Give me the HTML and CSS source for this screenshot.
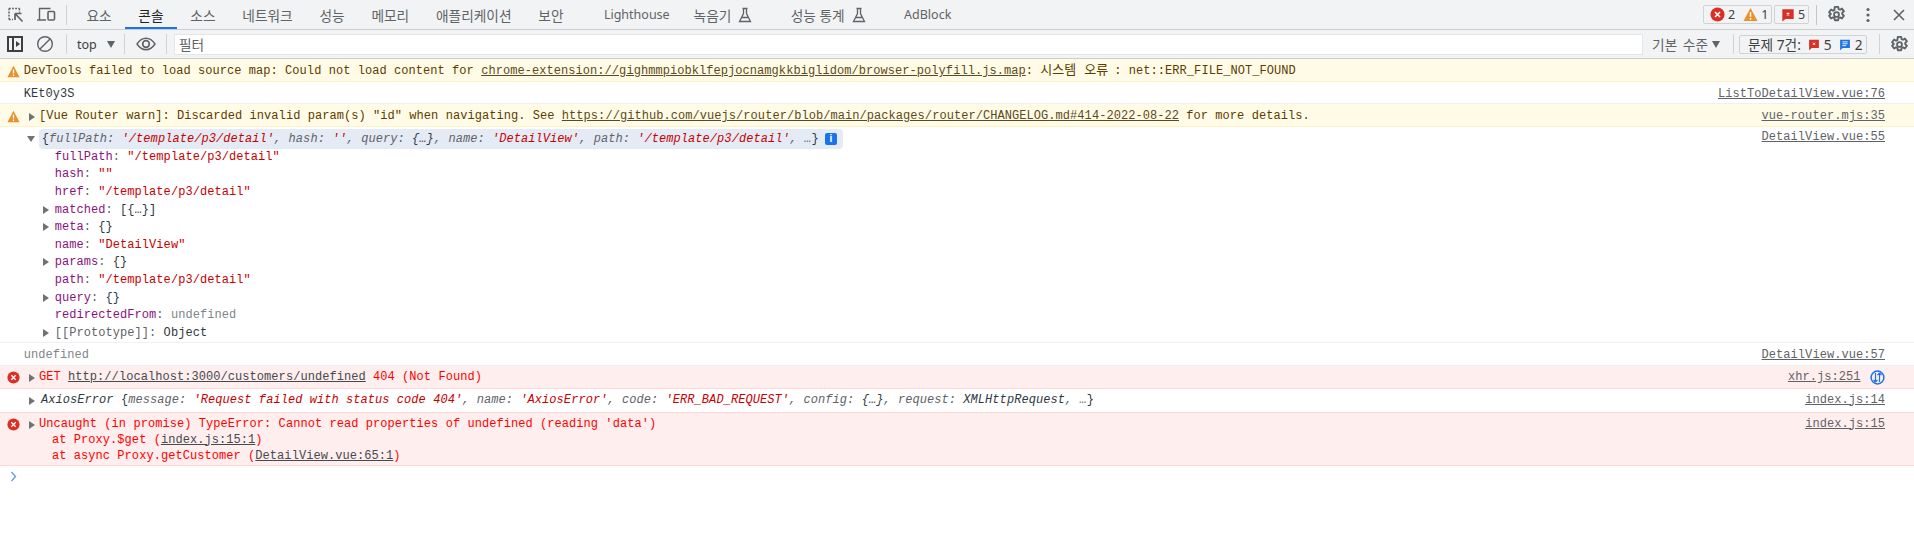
FILE: index.html
```html
<!DOCTYPE html>
<html lang="ko">
<head>
<meta charset="utf-8">
<title>DevTools Console</title>
<link rel="stylesheet" href="styles.css">
</head>
<body>
<svg class="defs" width="0" height="0" aria-hidden="true">
  <defs>
    <symbol id="i-gear" viewBox="0 0 20 20">
      <path d="M8.2 2h3.6l.4 2.3 1.5.7 2-1.2 2.1 2.9-1.7 1.5v1.6l1.7 1.5-2.1 2.9-2-1.2-1.5.7-.4 2.3H8.2l-.4-2.3-1.500-.7-2 1.2-2.100-2.900 1.700-1.500V9.200L2.200 7.700l2.100-2.900 2 1.200 1.500-.7z" fill="none" stroke="#5f6368" stroke-width="2" stroke-linejoin="round"/>
      <circle cx="10" cy="10" r="2.600" fill="none" stroke="#5f6368" stroke-width="1.900"/>
    </symbol>
    <symbol id="i-err" viewBox="0 0 16 16">
      <circle cx="8" cy="8" r="7.500" fill="#d93025"/>
      <path d="M5.300 5.300l5.400 5.400M10.700 5.300l-5.400 5.400" stroke="#fff" stroke-width="1.600"/>
    </symbol>
    <symbol id="i-warn" viewBox="0 0 16 16">
      <path d="M8 1L15.500 15H.5z" fill="#e8912d"/>
      <path d="M8 5.500v5M8 11.700v1.800" stroke="#fff" stroke-width="1.600"/>
    </symbol>
    <symbol id="i-flag" viewBox="0 0 16 16">
      <path d="M1.500 1.500h13v11H5L1.500 15.500z" fill="#d93025"/>
      <path d="M6.500 5.500l3 3M9.500 5.500l-3 3" stroke="#fff" stroke-width="1.300"/>
    </symbol>
    <symbol id="i-info" viewBox="0 0 16 16">
      <path d="M1.500 1.500h13v11H5L1.500 15.500z" fill="#1a73e8"/>
      <path d="M4.500 4.500h7M4.500 7h7M4.500 9.500h5" stroke="#fff" stroke-width="1.200"/>
    </symbol>
    <symbol id="i-flask" viewBox="0 0 14 16">
      <path d="M4.500 1.500h5M5.500 1.500v5L1.500 14.500h11L8.500 6.500v-5M3.800 10.500h6.400" fill="none" stroke="#5f6368" stroke-width="1.300"/>
    </symbol>
  </defs>
</svg>

<header class="tabbar">
  <div class="icon-group">
    <svg class="tool-icon" width="18" height="18" viewBox="0 0 18 18"><path d="M2 2.500h10.500M2 2.500v11M2 13.500h4M12.500 2.500v4" fill="none" stroke="#5f6368" stroke-width="1.500" stroke-dasharray="1.800 1.300"/><path d="M8 7.500h6.500M8 7.500v6.500M8 7.500l7.500 8" fill="none" stroke="#5f6368" stroke-width="1.700"/></svg>
    <svg class="tool-icon device" width="20" height="18" viewBox="0 0 20 18"><path d="M3.500 13.500V2.500h11M1 14h9" fill="none" stroke="#5f6368" stroke-width="1.400"/><rect x="12" y="5.500" width="6.500" height="8.500" rx="1" fill="none" stroke="#5f6368" stroke-width="1.600"/></svg>
    <span class="divider"></span>
  </div>
  <nav class="tabs">
    <span class="tab">요소</span>
    <span class="tab selected">콘솔</span>
    <span class="tab">소스</span>
    <span class="tab">네트워크</span>
    <span class="tab">성능</span>
    <span class="tab">메모리</span>
    <span class="tab">애플리케이션</span>
    <span class="tab">보안</span>
    <span class="tab wide latin lighthouse">Lighthouse</span>
    <span class="tab recorder">녹음기<svg class="flask" width="14" height="16"><use href="#i-flask"/></svg></span>
    <span class="tab wide">성능 통계<svg class="flask" width="14" height="16"><use href="#i-flask"/></svg></span>
    <span class="tab wide latin">AdBlock</span>
  </nav>
  <div class="tabbar-right">
    <span class="badge badge-counts">
      <svg width="15" height="15"><use href="#i-err"/></svg><span>2</span>
      <svg class="gap-icon" width="15" height="15"><use href="#i-warn"/></svg><span>1</span>
    </span>
    <span class="badge badge-issues">
      <svg width="14" height="14"><use href="#i-flag"/></svg><span>5</span>
    </span>
    <span class="divider divider-strong"></span>
    <svg class="gear" width="19" height="19"><use href="#i-gear"/></svg>
    <svg class="dots" width="4" height="16" viewBox="0 0 4 16"><circle cx="2" cy="2.500" r="1.600" fill="#5f6368"/><circle cx="2" cy="8" r="1.600" fill="#5f6368"/><circle cx="2" cy="13.500" r="1.600" fill="#5f6368"/></svg>
    <svg class="close" width="14" height="14" viewBox="0 0 14 14"><path d="M2 2l10 10M12 2L2 12" stroke="#5f6368" stroke-width="1.600"/></svg>
  </div>
</header>

<section class="toolbar">
  <svg class="tb-sidebar" width="16" height="16" viewBox="0 0 16 16"><rect x="1" y="1" width="14" height="14" fill="none" stroke="#3c4043" stroke-width="2"/><path d="M6 1v14" stroke="#3c4043" stroke-width="2"/><path d="M9 5l4 3-4 3z" fill="#3c4043"/></svg>
  <svg class="tb-clear" width="18" height="18" viewBox="0 0 18 18"><circle cx="9" cy="9" r="7.300" fill="none" stroke="#5f6368" stroke-width="1.400"/><path d="M4 14L14 4" stroke="#5f6368" stroke-width="1.400"/></svg>
  <span class="divider"></span>
  <span class="context">top</span>
  <span class="select-arrow"></span>
  <span class="divider"></span>
  <svg class="tb-eye" width="20" height="14" viewBox="0 0 20 14"><path d="M1 7c2.500-3.800 5.500-5.700 9-5.700S16.500 3.200 19 7c-2.500 3.800-5.500 5.700-9 5.700S3.500 10.800 1 7z" fill="none" stroke="#5f6368" stroke-width="1.400"/><circle cx="10" cy="7" r="3.300" fill="none" stroke="#5f6368" stroke-width="1.700"/></svg>
  <span class="divider"></span>
  <div class="filter">필터</div>
  <span class="level">기본 수준</span>
  <span class="select-arrow level-arrow"></span>
  <span class="divider"></span>
  <span class="issues">
    <span>문제 7건:</span>
    <svg class="issue-flag" width="12" height="13"><use href="#i-flag"/></svg><span>5</span>
    <svg class="issue-flag" width="12" height="13"><use href="#i-info"/></svg><span>2</span>
  </span>
  <span class="divider"></span>
  <svg class="gear" width="19" height="19"><use href="#i-gear"/></svg>
</section>

<main class="console">
  <div class="msg warn">
    <svg class="msg-icon" width="13" height="13"><use href="#i-warn"/></svg>
    <div class="msg-body">DevTools failed to load source map: Could not load content for <a class="link warn-link">chrome-extension://gighmmpiobklfepjocnamgkkbiglidom/browser-polyfill.js.map</a>: <span class="cjk">시스템 오류</span>: net::ERR_FILE_NOT_FOUND</div>
  </div>
  <div class="msg plain">
    <span class="msg-icon"></span>
    <div class="msg-body">KEt0y3S</div>
    <a class="source">ListToDetailView.vue:76</a>
  </div>
  <div class="msg warn">
    <svg class="msg-icon" width="13" height="13"><use href="#i-warn"/></svg>
    <span class="tri"></span>
    <div class="msg-body tight">[Vue Router warn]: Discarded invalid param(s) "id" when navigating. See <a class="link warn-link">https://github.com/vuejs/router/blob/main/packages/router/CHANGELOG.md#414-2022-08-22</a> for more details.</div>
    <a class="source">vue-router.mjs:35</a>
  </div>
  <div class="msg plain object">
    <span class="msg-icon"></span>
    <div class="msg-body obj-body">
      <div class="obj-head">
        <span class="tri tri-down obj-tri"></span>
        <span class="preview">{<i class="pk">fullPath:</i> <i class="ps">'/template/p3/detail'</i><i class="pk">, hash:</i> <i class="ps">''</i><i class="pk">, query:</i> <i class="pd">{…}</i><i class="pk">, name:</i> <i class="ps">'DetailView'</i><i class="pk">, path:</i> <i class="ps">'/template/p3/detail'</i><i class="pk">, …</i>}<b class="info-chip">i</b></span>
      </div>
      <div class="prop"><span class="k">fullPath</span><span class="c">:</span> <span class="s">"/template/p3/detail"</span></div>
      <div class="prop"><span class="k">hash</span><span class="c">:</span> <span class="s">""</span></div>
      <div class="prop"><span class="k">href</span><span class="c">:</span> <span class="s">"/template/p3/detail"</span></div>
      <div class="prop"><span class="tri prop-tri"></span><span class="k">matched</span><span class="c">:</span> [{…}]</div>
      <div class="prop"><span class="tri prop-tri"></span><span class="k">meta</span><span class="c">:</span> {}</div>
      <div class="prop"><span class="k">name</span><span class="c">:</span> <span class="s">"DetailView"</span></div>
      <div class="prop"><span class="tri prop-tri"></span><span class="k">params</span><span class="c">:</span> {}</div>
      <div class="prop"><span class="k">path</span><span class="c">:</span> <span class="s">"/template/p3/detail"</span></div>
      <div class="prop"><span class="tri prop-tri"></span><span class="k">query</span><span class="c">:</span> {}</div>
      <div class="prop"><span class="k">redirectedFrom</span><span class="c">:</span> <span class="u">undefined</span></div>
      <div class="prop"><span class="tri prop-tri"></span><span class="g">[[Prototype]]</span><span class="c">:</span> Object</div>
    </div>
    <a class="source">DetailView.vue:55</a>
  </div>
  <div class="msg plain">
    <span class="msg-icon"></span>
    <div class="msg-body u">undefined</div>
    <a class="source">DetailView.vue:57</a>
  </div>
  <div class="msg err">
    <svg class="msg-icon" width="13" height="13"><use href="#i-err"/></svg>
    <span class="tri"></span>
    <div class="msg-body tight">GET <a class="link">http://localhost:3000/customers/undefined</a> 404 (Not Found)</div>
    <a class="source">xhr.js:251</a>
    <svg class="net" width="15" height="15" viewBox="0 0 15 15"><circle cx="7.500" cy="7.500" r="6.400" fill="none" stroke="#1a73e8" stroke-width="1.500"/><path d="M5.500 3v9M5.500 12L3.500 9.800M5.500 12l2-2.200M9.500 12V3M9.500 3l-2 2.200M9.500 3l2 2.200" fill="none" stroke="#1a73e8" stroke-width="1.200"/></svg>
  </div>
  <div class="msg axios">
    <span class="msg-icon"></span>
    <span class="tri"></span>
    <div class="msg-body tight preview-plain"><i>AxiosError</i> {<i class="pk">message:</i> <i class="ps">'Request failed with status code 404'</i><i class="pk">, name:</i> <i class="ps">'AxiosError'</i><i class="pk">, code:</i> <i class="ps">'ERR_BAD_REQUEST'</i><i class="pk">, config:</i> <i class="pd">{…}</i><i class="pk">, request:</i> <i>XMLHttpRequest</i><i class="pk">, …</i>}</div>
    <a class="source">index.js:14</a>
  </div>
  <div class="msg err multi">
    <svg class="msg-icon" width="13" height="13"><use href="#i-err"/></svg>
    <span class="tri"></span>
    <div class="msg-body tight">
      <div>Uncaught (in promise) TypeError: Cannot read properties of undefined (reading 'data')</div>
      <div class="stack">at Proxy.$get (<a class="link">index.js:15:1</a>)</div>
      <div class="stack">at async Proxy.getCustomer (<a class="link">DetailView.vue:65:1</a>)</div>
    </div>
    <a class="source">index.js:15</a>
  </div>
  <div class="prompt"><svg width="7" height="11" viewBox="0 0 7 11"><path d="M1.500 1l4 4.500-4 4.500" fill="none" stroke="#5b9bf0" stroke-width="1.300"/></svg></div>
</main>
</body>
</html>
```

FILE: styles.css
```css
html, body {
  margin: 0;
  padding: 0;
  height: 556px;
  overflow: hidden;
  background: #fff;
}
body {
  font-family: "Noto Sans", "Noto Sans CJK KR", sans-serif;
  font-size: 12.5px;
  color: #3c4043;
}
.defs { position: absolute; }
svg { display: block; flex: none; }

.tabbar {
  display: flex;
  align-items: center;
  height: 29px;
  background: #f1f3f4;
  border-bottom: 1px solid #cbcdd1;
}
.icon-group {
  display: flex;
  align-items: center;
  padding-left: 7px;
}
.device { margin-left: 11px; }
.divider {
  display: block;
  width: 1px;
  height: 20px;
  background: #d0d2d6;
  flex: none;
}
.icon-group .divider { margin-left: 10px; }
.tabs {
  display: flex;
  height: 29px;
  margin-left: 6px;
  font-size: 13.7px;
}
.tab {
  display: flex;
  align-items: center;
  gap: 7px;
  padding: 0 13.4px;
  color: #5f6368;
  box-sizing: border-box;
  white-space: nowrap;
}
.tab.wide { padding-left: 25px; }
.tab.latin { font-size: 12.5px; }
.tab.lighthouse { padding-left: 27px; }
.tab.recorder { padding-left: 10.5px; }
.tab.selected {
  color: #202124;
  border-bottom: 2px solid #1a73e8;
  padding-top: 2px;
}
.tabbar-right {
  display: flex;
  align-items: center;
  margin-left: auto;
  padding-right: 8px;
}
.badge {
  display: flex;
  align-items: center;
  gap: 3px;
  height: 19px;
  box-sizing: border-box;
  padding: 0 4px 0 6px;
  border: 1px solid #d0d2d6;
  border-radius: 2px;
  color: #3c4043;
}
.badge-counts { width: 69px; }
.gap-icon { margin-left: 5px; }
.badge-issues { width: 35px; margin-left: 2px; }
.divider-strong { margin-left: 7px; background: #c4c6ca; }
.tabbar-right .gear { margin-left: 10px; }
.dots { margin-left: 20px; }
.close { margin-left: 22px; }

.toolbar {
  display: flex;
  align-items: center;
  height: 28px;
  padding-left: 7px;
  padding-right: 5px;
  background: #f1f3f4;
  border-bottom: 1px solid #cbcdd1;
  font-size: 13.7px;
}
.tb-clear { margin-left: 13px; }
.tb-clear + .divider { margin-left: 12px; }
.context { margin-left: 10px; color: #3c4043; width: 24px; font-size: 12.5px; }
.select-arrow {
  width: 0;
  height: 0;
  margin-left: 6px;
  border-left: 4.5px solid transparent;
  border-right: 4.5px solid transparent;
  border-top: 7px solid #5f6368;
}
.select-arrow + .divider { margin-left: 9px; }
.tb-eye { margin-left: 11px; }
.tb-eye + .divider { margin-left: 10px; }
.filter {
  flex: 1;
  margin-left: 7px;
  height: 21px;
  box-sizing: border-box;
  padding-left: 4px;
  line-height: 19px;
  background: #fff;
  border: 1px solid #e3e5e8;
  color: #5f6368;
}
.level { margin-left: 9px; color: #5f6368; word-spacing: 2px; }
.level-arrow { margin-left: 4px; }
.level-arrow + .divider { margin-left: 13px; }
.issues {
  display: flex;
  align-items: center;
  gap: 4px;
  margin-left: 5px;
  width: 128px;
  height: 19px;
  box-sizing: border-box;
  padding-left: 8px;
  border: 1px solid #d0d2d6;
  border-radius: 2px;
  white-space: nowrap;
}
.issue-flag { margin-left: 3px; }
.issues + .divider { margin-left: 12px; }
.toolbar .gear { margin-left: 10px; }

.console {
  font-family: "Liberation Mono", "Noto Sans CJK KR", monospace;
  font-size: 12px;
  letter-spacing: 0.06px;
  line-height: 17.6px;
  color: #303942;
}
.msg {
  display: flex;
  align-items: flex-start;
  box-sizing: border-box;
  padding: 4px 29px 0 6.5px;
  border-bottom: 1px solid #f0f0f0;
  white-space: nowrap;
}
.msg-icon { width: 13px; height: 13px; margin-top: 2px; flex: none; }
.msg-body { flex: 1; margin-left: 4.2px; min-width: 0; }
.warn {
  background: #fffbe7;
  border-bottom-color: #fdf2c4;
  color: #5c3c00;
}
.plain { background: #fff; }
.err {
  background: #ffeeee;
  border-bottom-color: #ffd6d6;
  color: #f00;
  padding-top: 3px;
  padding-bottom: 1px;
}
.axios { border-bottom-color: #ffd6d6; padding-top: 3px; padding-bottom: 2.5px; }
.multi { line-height: 16px; padding-top: 3px; padding-bottom: 1.5px; }
.stack { padding-left: 13px; }
.link { color: #46494e; text-decoration: underline; }
.warn-link { color: #5c4a20; }
.cjk { font-size: 13px; line-height: 1; margin: 0 6px 0 0; }
.source {
  flex: none;
  color: #5f6368;
  text-decoration: underline;
}
.net { margin-left: 9.5px; margin-top: 1px; }
.tri {
  flex: none;
  width: 0;
  height: 0;
  margin: 5px 0 0 9px;
  border-top: 4px solid transparent;
  border-bottom: 4px solid transparent;
  border-left: 6.5px solid #6e7378;
}
.tri + .msg-body { margin-left: 4.5px; }
.tri + .preview-plain { margin-left: 6.5px; }
.tri-down {
  margin: 0;
  border-left: 4px solid transparent;
  border-right: 4px solid transparent;
  border-top: 6.5px solid #6e7378;
  border-bottom: 0;
}
.object { padding-top: 2px; padding-bottom: 0; }
.obj-head {
  position: relative;
  height: 20px;
  margin-left: 15px;
}
.obj-tri { position: absolute; left: -11.5px; top: 7px; }
.preview {
  display: block;
  width: 804px;
  height: 20px;
  box-sizing: border-box;
  padding-left: 3px;
  line-height: 21px;
  background: #e4ebf5;
  border-radius: 4px;
  color: #303942;
}
.preview i, .preview-plain i { font-style: italic; }
.pk { color: #5f6368; }
.ps { color: #c80000; }
.pd { color: #303942; }
.preview-plain { color: #303942; }
.info-chip {
  display: inline-block;
  vertical-align: middle;
  width: 12px;
  height: 12px;
  margin-left: 6px;
  border-radius: 2px;
  background: #1a73e8;
  color: #fff;
  font: 700 10px/12px "Liberation Sans", sans-serif;
  text-align: center;
}
.prop {
  position: relative;
  padding-left: 31px;
  height: 17.6px;
  color: #303942;
}
.prop-tri { position: absolute; left: 19.7px; top: 0; margin: 4px 0 0; }
.k { color: #881280; }
.c { color: #5f6368; }
.s { color: #c80000; }
.u { color: #80868b; }
.g { color: #5f6368; }
.prompt {
  padding: 5px 0 0 10px;
}
```
